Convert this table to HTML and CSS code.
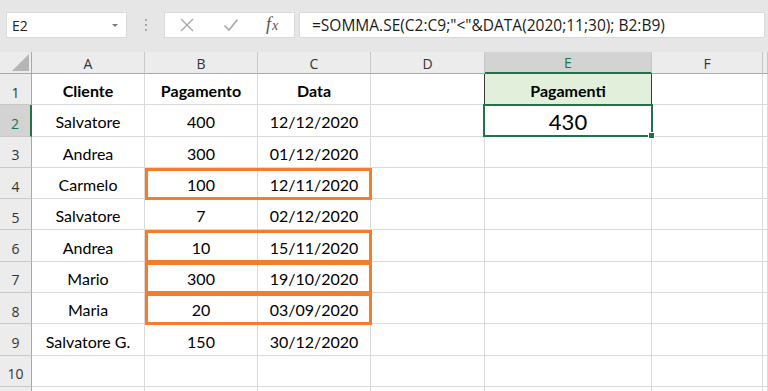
FILE: index.html
```html
<!DOCTYPE html>
<html lang="it">
<head>
<meta charset="utf-8">
<title>SOMMA.SE</title>
<link rel="stylesheet" href="styles.css">
</head>
<body>
<div class="app">
  <div class="topbar">
    <div class="namebox"><span>E2</span><span class="dd"></span></div>
    <div class="grip"><i></i><i></i><i></i></div>
    <div class="btns">
      <svg class="ico" width="16" height="16" viewBox="0 0 16 16"><path d="M2 2 L14 14 M14 2 L2 14" stroke="#a6a6a6" stroke-width="1.3" fill="none"/></svg>
      <svg class="ico" width="16" height="14" viewBox="0 0 16 14"><path d="M1.5 7.5 L6 12 L14.5 1.5" stroke="#a6a6a6" stroke-width="1.6" fill="none"/></svg>
      <span class="fx"><span class="fx-f">f</span><span class="fx-x">x</span></span>
    </div>
    <div class="formula">=SOMMA.SE(C2:C9;"&lt;"&amp;DATA(2020;11;30); B2:B9)</div>
  </div>
  <div class="sheet">
    <div class="cells grid">
      <div class="ch corner"><span class="tri"></span></div>
      <div class="ch">A</div><div class="ch">B</div><div class="ch">C</div><div class="ch">D</div><div class="ch sel">E</div><div class="ch">F</div><div class="ch"></div>

      <div class="rh">1</div><div class="c b">Cliente</div><div class="c b">Pagamento</div><div class="c b">Data</div><div class="c d1"></div><div class="c e1 b">Pagamenti</div><div class="c"></div><div class="c"></div>
      <div class="rh sel">2</div><div class="c">Salvatore</div><div class="c">400</div><div class="c">12/12/2020</div><div class="c"></div><div class="c big">430</div><div class="c"></div><div class="c"></div>
      <div class="rh">3</div><div class="c">Andrea</div><div class="c">300</div><div class="c">01/12/2020</div><div class="c"></div><div class="c"></div><div class="c"></div><div class="c"></div>
      <div class="rh">4</div><div class="c">Carmelo</div><div class="c">100</div><div class="c">12/11/2020</div><div class="c"></div><div class="c"></div><div class="c"></div><div class="c"></div>
      <div class="rh">5</div><div class="c">Salvatore</div><div class="c">7</div><div class="c">02/12/2020</div><div class="c"></div><div class="c"></div><div class="c"></div><div class="c"></div>
      <div class="rh">6</div><div class="c">Andrea</div><div class="c">10</div><div class="c">15/11/2020</div><div class="c"></div><div class="c"></div><div class="c"></div><div class="c"></div>
      <div class="rh">7</div><div class="c">Mario</div><div class="c">300</div><div class="c">19/10/2020</div><div class="c"></div><div class="c"></div><div class="c"></div><div class="c"></div>
      <div class="rh">8</div><div class="c">Maria</div><div class="c">20</div><div class="c">03/09/2020</div><div class="c"></div><div class="c"></div><div class="c"></div><div class="c"></div>
      <div class="rh">9</div><div class="c">Salvatore G.</div><div class="c">150</div><div class="c">30/12/2020</div><div class="c"></div><div class="c"></div><div class="c"></div><div class="c"></div>
      <div class="rh">10</div><div class="c"></div><div class="c"></div><div class="c"></div><div class="c"></div><div class="c"></div><div class="c"></div><div class="c"></div>
      <div class="rh"></div><div class="c"></div><div class="c"></div><div class="c"></div><div class="c"></div><div class="c"></div><div class="c"></div><div class="c"></div>
    </div>
    <div class="marks grid">
      <div class="box r4"></div>
      <div class="box r6"></div>
      <div class="box r7"></div>
      <div class="box r8"></div>
      <div class="cursor"><span class="handle"></span></div>
    </div>
  </div>
</div>
</body>
</html>
```

FILE: styles.css
```css
* { box-sizing: border-box; }
html, body { margin: 0; padding: 0; }
body {
  width: 768px;
  height: 391px;
  overflow: hidden;
  background: #ffffff;
  font-family: "Open Sans", "Noto Sans", sans-serif;
}
.app { display: flex; flex-direction: column; width: 768px; height: 391px; }

.topbar {
  height: 52px;
  flex: none;
  background: #e6e6e6;
  display: flex;
  align-items: flex-start;
  padding-top: 12px;
}
.namebox {
  margin-left: 6px;
  width: 121px;
  height: 26px;
  background: #fff;
  border: 1px solid #dadada;
  display: flex;
  align-items: center;
  justify-content: space-between;
  padding: 0 8px 0 5px;
  font-size: 14px;
  color: #222;
}
.dd {
  width: 0; height: 0;
  border-left: 3px solid transparent;
  border-right: 3px solid transparent;
  border-top: 3px solid #7a7a7a;
}
.grip {
  width: 37px;
  height: 26px;
  display: flex;
  flex-direction: column;
  align-items: center;
  justify-content: center;
  gap: 3px;
}
.grip i { display: block; width: 2px; height: 2px; background: #a8a8a8; }
.btns {
  width: 131px;
  height: 26px;
  background: #fff;
  border: 1px solid #dadada;
  display: flex;
  align-items: center;
  padding-left: 14px;
}
.btns .ico:nth-child(1) { margin-right: 28px; }
.btns .ico:nth-child(2) { margin-right: 27px; }
.fx {
  font-family: "Liberation Serif", serif;
  font-style: italic;
  color: #555;
  display: flex;
  align-items: baseline;
  margin-top: -2px;
}
.fx-f { font-size: 18px; }
.fx-x { font-size: 14px; margin-left: 1px; }
.formula {
  flex: 1;
  margin-left: 4px;
  margin-right: 3px;
  height: 26px;
  background: #fff;
  border: 1px solid #dadada;
  font-size: 15.5px;
  color: #1a1a1a;
  line-height: 24px;
  padding-left: 12px;
  white-space: nowrap;
}

.sheet {
  flex: 1;
  display: grid;
  overflow: hidden;
}
.grid {
  grid-area: 1 / 1;
  display: grid;
  grid-template-columns: 32px 113px 113px 113px 114px 167px 111px 5px;
  grid-template-rows: 22px repeat(11, 31.3px);
}
.marks { pointer-events: none; }
.ch {
  background: #ececec;
  border-right: 1px solid #c8c8c8;
  border-bottom: 1px solid #a9a9a9;
  font-size: 14px;
  color: #333;
  display: flex;
  align-items: center;
  justify-content: center;
  padding-top: 1px;
}
.ch.corner { border-right-color: #a9a9a9; position: relative; }
.tri {
  position: absolute;
  right: 2px;
  bottom: 2px;
  width: 0; height: 0;
  border-left: 17px solid transparent;
  border-bottom: 17px solid #b5b5b5;
}
.ch.sel {
  background: #d3d3d3;
  color: #217346;
  border-bottom: 2px solid #217346;
}
.rh {
  background: #ececec;
  border-right: 1px solid #a9a9a9;
  border-bottom: 1px solid #c8c8c8;
  font-size: 14px;
  color: #333;
  display: flex;
  align-items: center;
  justify-content: center;
  padding-top: 6px;
}
.rh.sel {
  background: #d3d3d3;
  color: #217346;
  border-right: 2px solid #217346;
}
.c {
  border-right: 1px solid #dadada;
  border-bottom: 1px solid #dadada;
  font-family: "Lato", "Open Sans", sans-serif;
  font-size: 16px;
  color: #000;
  display: flex;
  align-items: center;
  justify-content: center;
  padding-top: 3px;
  white-space: nowrap;
}
.c.b { font-weight: 700; }
.c.d1 { border-right: 1px solid #3c3c3c; }
.c.e1 {
  background: #e2efda;
  border-right: 1px solid #3c3c3c;
  border-bottom: 1px solid #217346;
}
.c.big { font-size: 22px; padding-top: 2px; }

.box {
  grid-column: 3 / 5;
  border: 3px solid #f47d2c;
  margin: 0 -1px -1px 0;
}
.r4 { grid-row: 5; }
.r6 { grid-row: 7; }
.r7 { grid-row: 8; }
.r8 { grid-row: 9; }

.cursor {
  grid-column: 6;
  grid-row: 3;
  border: 2px solid #217346;
  margin: -1px -1px 0 -2px;
  position: relative;
}
.handle {
  position: absolute;
  right: -4px;
  bottom: -4px;
  width: 7px;
  height: 7px;
  background: #217346;
  border: 1px solid #fff;
}
```
